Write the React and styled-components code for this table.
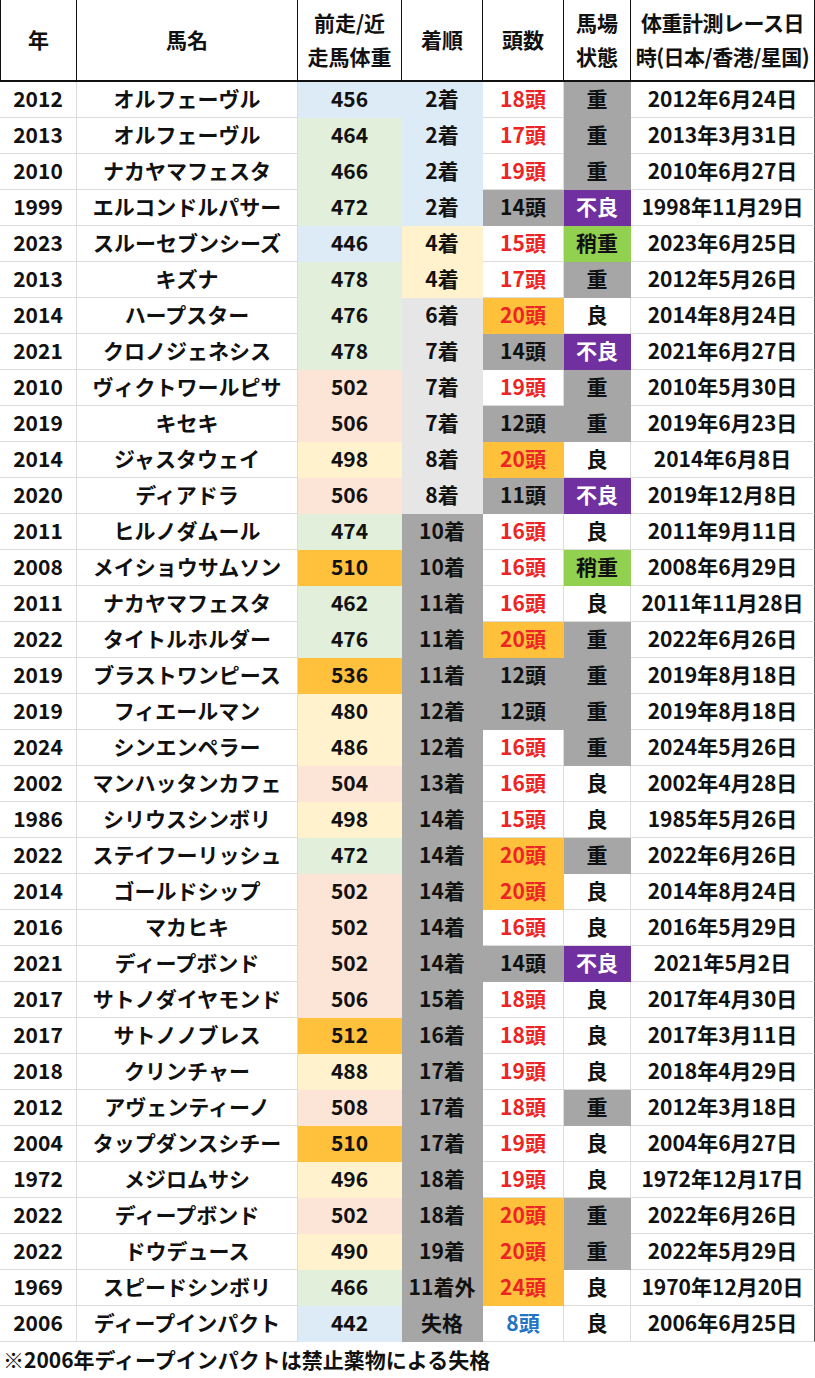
import React from 'react'
import styled, { createGlobalStyle } from 'styled-components'

const GlobalStyle = createGlobalStyle`
  html, body {
    margin: 0;
    padding: 0;
    background: #ffffff;
  }
  body {
    font-family: "Noto Sans CJK JP", "Noto Sans", sans-serif;
    font-weight: 700;
    color: #111111;
  }
`

const C = {
  blue: '#ddebf7',
  green: '#e2efda',
  peach: '#fce4d6',
  yellow: '#fff2cc',
  orange: '#ffc03c',
  lgray: '#e7e6e6',
  dgray: '#a6a6a6',
  purple: '#7030a0',
  lime: '#92d050',
  red: '#ec2424',
  link: '#2273c3'
}

const COLS = '77px 221px 104px 81px 81px 67px 184px'

const Page = styled.div`
  width: 815px;
`

const Table = styled.div`
  display: grid;
  grid-template-columns: ${COLS};
  grid-auto-rows: 36px;
`

const HeadRow = styled.div`
  display: grid;
  grid-template-columns: ${COLS};
  height: 82px;
  border-bottom: 2px solid #111111;
  box-sizing: border-box;
`

const HeadCell = styled.div`
  display: flex;
  flex-direction: column;
  align-items: center;
  justify-content: center;
  font-size: 21px;
  line-height: 34px;
  padding-bottom: 2px;
  white-space: nowrap;
  border-right: 1px solid #111111;
  border-left: ${p => (p.$first ? '1px solid #111111' : 'none')};
  letter-spacing: ${p => (p.$tight ? '-0.5px' : '0')};
  box-sizing: border-box;
`

const Cell = styled.div`
  display: flex;
  align-items: center;
  justify-content: center;
  font-size: 21px;
  padding-bottom: 3px;
  white-space: nowrap;
  background: ${p => p.$bg || '#ffffff'};
  color: ${p => p.$color || '#111111'};
  border-right: 1px solid ${p => p.$bg || '#dcdcdc'};
  border-bottom: 1px solid ${p => p.$bg || '#dcdcdc'};
  box-sizing: border-box;
  ${p => (p.$edge ? 'border-right-color: #555555;' : '')}
`

const Note = styled.div`
  font-size: 21px;
  line-height: 34px;
  padding-left: 3px;
`

// [year, name, weight, weightBg, place, placeBg, runners, runnersStyle, track, date]
const rows = [
  ['2012', 'オルフェーヴル', 456, 'blue', '2着', 'blue', '18頭', 'r', '重', '2012年6月24日'],
  ['2013', 'オルフェーヴル', 464, 'green', '2着', 'blue', '17頭', 'r', '重', '2013年3月31日'],
  ['2010', 'ナカヤマフェスタ', 466, 'green', '2着', 'blue', '19頭', 'r', '重', '2010年6月27日'],
  ['1999', 'エルコンドルパサー', 472, 'green', '2着', 'blue', '14頭', 'g', '不良', '1998年11月29日'],
  ['2023', 'スルーセブンシーズ', 446, 'blue', '4着', 'yellow', '15頭', 'r', '稍重', '2023年6月25日'],
  ['2013', 'キズナ', 478, 'green', '4着', 'yellow', '17頭', 'r', '重', '2012年5月26日'],
  ['2014', 'ハープスター', 476, 'green', '6着', 'lgray', '20頭', 'o', '良', '2014年8月24日'],
  ['2021', 'クロノジェネシス', 478, 'green', '7着', 'lgray', '14頭', 'g', '不良', '2021年6月27日'],
  ['2010', 'ヴィクトワールピサ', 502, 'peach', '7着', 'lgray', '19頭', 'r', '重', '2010年5月30日'],
  ['2019', 'キセキ', 506, 'peach', '7着', 'lgray', '12頭', 'g', '重', '2019年6月23日'],
  ['2014', 'ジャスタウェイ', 498, 'yellow', '8着', 'lgray', '20頭', 'o', '良', '2014年6月8日'],
  ['2020', 'ディアドラ', 506, 'peach', '8着', 'lgray', '11頭', 'g', '不良', '2019年12月8日'],
  ['2011', 'ヒルノダムール', 474, 'green', '10着', 'dgray', '16頭', 'r', '良', '2011年9月11日'],
  ['2008', 'メイショウサムソン', 510, 'orange', '10着', 'dgray', '16頭', 'r', '稍重', '2008年6月29日'],
  ['2011', 'ナカヤマフェスタ', 462, 'green', '11着', 'dgray', '16頭', 'r', '良', '2011年11月28日'],
  ['2022', 'タイトルホルダー', 476, 'green', '11着', 'dgray', '20頭', 'o', '重', '2022年6月26日'],
  ['2019', 'ブラストワンピース', 536, 'orange', '11着', 'dgray', '12頭', 'g', '重', '2019年8月18日'],
  ['2019', 'フィエールマン', 480, 'yellow', '12着', 'dgray', '12頭', 'g', '重', '2019年8月18日'],
  ['2024', 'シンエンペラー', 486, 'yellow', '12着', 'dgray', '16頭', 'r', '重', '2024年5月26日'],
  ['2002', 'マンハッタンカフェ', 504, 'peach', '13着', 'dgray', '16頭', 'r', '良', '2002年4月28日'],
  ['1986', 'シリウスシンボリ', 498, 'yellow', '14着', 'dgray', '15頭', 'r', '良', '1985年5月26日'],
  ['2022', 'ステイフーリッシュ', 472, 'green', '14着', 'dgray', '20頭', 'o', '重', '2022年6月26日'],
  ['2014', 'ゴールドシップ', 502, 'peach', '14着', 'dgray', '20頭', 'o', '良', '2014年8月24日'],
  ['2016', 'マカヒキ', 502, 'peach', '14着', 'dgray', '16頭', 'r', '良', '2016年5月29日'],
  ['2021', 'ディープボンド', 502, 'peach', '14着', 'dgray', '14頭', 'g', '不良', '2021年5月2日'],
  ['2017', 'サトノダイヤモンド', 506, 'peach', '15着', 'dgray', '18頭', 'r', '良', '2017年4月30日'],
  ['2017', 'サトノノブレス', 512, 'orange', '16着', 'dgray', '18頭', 'r', '良', '2017年3月11日'],
  ['2018', 'クリンチャー', 488, 'yellow', '17着', 'dgray', '19頭', 'r', '良', '2018年4月29日'],
  ['2012', 'アヴェンティーノ', 508, 'peach', '17着', 'dgray', '18頭', 'r', '重', '2012年3月18日'],
  ['2004', 'タップダンスシチー', 510, 'orange', '17着', 'dgray', '19頭', 'r', '良', '2004年6月27日'],
  ['1972', 'メジロムサシ', 496, 'yellow', '18着', 'dgray', '19頭', 'r', '良', '1972年12月17日'],
  ['2022', 'ディープボンド', 502, 'peach', '18着', 'dgray', '20頭', 'o', '重', '2022年6月26日'],
  ['2022', 'ドウデュース', 490, 'yellow', '19着', 'dgray', '20頭', 'o', '重', '2022年5月29日'],
  ['1969', 'スピードシンボリ', 466, 'green', '11着外', 'dgray', '24頭', 'o', '良', '1970年12月20日'],
  ['2006', 'ディープインパクト', 442, 'blue', '失格', 'dgray', '8頭', 'b', '良', '2006年6月25日']
]

const runnerStyle = {
  r: { color: C.red },
  o: { bg: C.orange, color: C.red },
  g: { bg: C.dgray },
  b: { color: C.link }
}

const trackStyle = {
  '重': { bg: C.dgray },
  '不良': { bg: C.purple, color: '#ffffff' },
  '稍重': { bg: C.lime },
  '良': {}
}

const App = () => (
  <Page>
    <GlobalStyle />
    <HeadRow>
      <HeadCell $first>年</HeadCell>
      <HeadCell>馬名</HeadCell>
      <HeadCell>
        <span>前走/近</span>
        <span>走馬体重</span>
      </HeadCell>
      <HeadCell>着順</HeadCell>
      <HeadCell>頭数</HeadCell>
      <HeadCell>
        <span>馬場</span>
        <span>状態</span>
      </HeadCell>
      <HeadCell $tight>
        <span>体重計測レース日</span>
        <span>時(日本/香港/星国)</span>
      </HeadCell>
    </HeadRow>
    <Table>
      {rows.map((r, i) => {
        const [year, name, weight, wBg, place, pBg, runners, rKey, track, date] = r
        const rs = runnerStyle[rKey]
        const ts = trackStyle[track]
        return (
          <React.Fragment key={i}>
            <Cell>{year}</Cell>
            <Cell>{name}</Cell>
            <Cell $bg={C[wBg]}>{weight}</Cell>
            <Cell $bg={C[pBg]}>{place}</Cell>
            <Cell $bg={rs.bg} $color={rs.color}>{runners}</Cell>
            <Cell $bg={ts.bg} $color={ts.color}>{track}</Cell>
            <Cell $edge>{date}</Cell>
          </React.Fragment>
        )
      })}
    </Table>
    <Note>※2006年ディープインパクトは禁止薬物による失格</Note>
  </Page>
)

export default App
